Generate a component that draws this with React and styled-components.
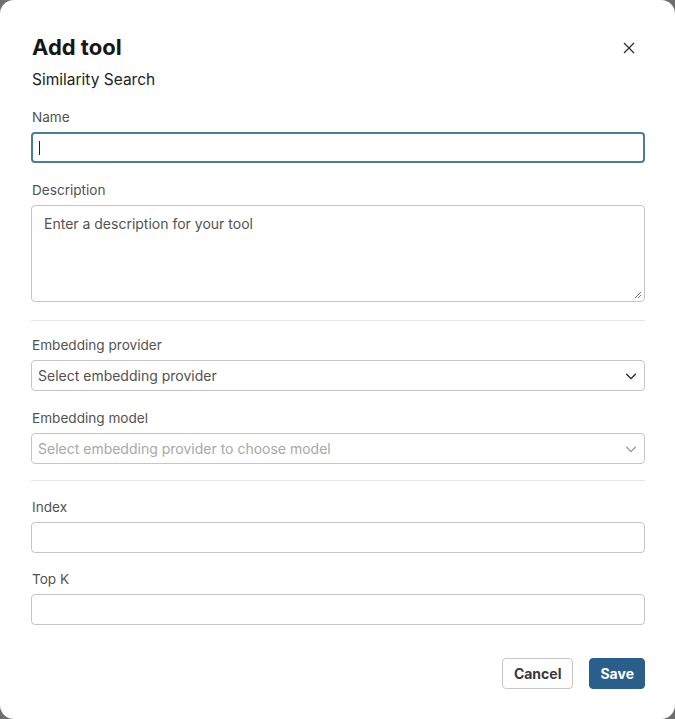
import React from "react";
import styled, { createGlobalStyle } from "styled-components";

const Global = createGlobalStyle`
  html, body { margin: 0; padding: 0; background: #6f6f6f; }
  body { font-family: "Inter", "Noto Sans", sans-serif; color: #161616; }
  * { box-sizing: border-box; }
`;

const Modal = styled.div`
  width: 675px;
  height: 719px;
  background: #ffffff;
  border-radius: 14px;
  padding: 32px 30px 0 31px;
  display: flex;
  flex-direction: column;
`;

const Header = styled.div`
  display: flex;
  justify-content: space-between;
  align-items: flex-start;
`;

const Title = styled.h2`
  margin: 0;
  font-size: 22px;
  line-height: 30px;
  font-weight: 700;
  letter-spacing: 0;
  padding-left: 1px;
`;

const Close = styled.button`
  border: none;
  background: none;
  padding: 0;
  width: 16px;
  height: 16px;
  margin-top: 8px;
  margin-right: 8px;
  display: flex;
  align-items: center;
  justify-content: center;
  cursor: pointer;
`;

const Subtitle = styled.div`
  font-size: 15.5px;
  line-height: 20px;
  margin-top: 8px;
  padding-left: 1px;
  color: #222;
`;

const Section = styled.div`
  display: flex;
  flex-direction: column;
`;

const Label = styled.label`
  font-size: 13.6px;
  line-height: 20px;
  color: #525252;
  padding-left: 1px;
  margin-bottom: 5px;
`;

const Field = styled.div`
  height: ${(p) => p.$h || 31}px;
  border: ${(p) => (p.$focus ? "2px solid #4a7d96" : "1px solid #c6c6c6")};
  border-radius: 4px;
  background: #fff;
  display: flex;
  align-items: ${(p) => (p.$top ? "flex-start" : "center")};
  padding: ${(p) => (p.$top ? "9px 12px" : "0 6px")};
  position: relative;
  font-size: 14px;
  color: ${(p) => (p.$muted ? "#a8a8a8" : "#525252")};
`;

const Caret = styled.span`
  width: 1.2px;
  height: 14px;
  background: #222;
`;

const Placeholder = styled.span`
  flex: 1;
  white-space: nowrap;
`;

const Resize = styled.svg`
  position: absolute;
  right: 2px;
  bottom: 2px;
`;

const Divider = styled.hr`
  border: none;
  border-top: 1px solid #e3e3e3;
  margin: ${(p) => p.$m};
`;

const Group = styled.div`
  display: flex;
  flex-direction: column;
  gap: ${(p) => p.$gap || 17}px;
  margin-top: ${(p) => p.$mt || 0}px;
`;

const Footer = styled.div`
  display: flex;
  justify-content: flex-end;
  gap: 16px;
  margin-top: 33px;
`;

const Button = styled.button`
  height: 31px;
  padding: 0 ${(p) => (p.$primary ? 10 : 11)}px;
  border-radius: 4px;
  font-family: inherit;
  font-size: 14px;
  font-weight: 700;
  cursor: pointer;
  border: ${(p) => (p.$primary ? "1px solid #2b5f8b" : "1px solid #c6c6c6")};
  background: ${(p) => (p.$primary ? "#2b5f8b" : "#fff")};
  color: ${(p) => (p.$primary ? "#fff" : "#393939")};
`;

const Chevron = ({ color }) => (
  <svg width="14" height="14" viewBox="0 0 16 16" fill="none">
    <path d="M3 6l5 5 5-5" stroke={color} strokeWidth="1.6" strokeLinecap="round" strokeLinejoin="round" />
  </svg>
);

export default function App() {
  return (
    <>
      <Global />
      <Modal>
        <Header>
          <Title>Add tool</Title>
          <Close aria-label="Close">
            <svg width="12" height="12" viewBox="0 0 12 12">
              <path d="M1 1l10 10M11 1L1 11" stroke="#333" strokeWidth="1.4" />
            </svg>
          </Close>
        </Header>
        <Subtitle>Similarity Search</Subtitle>

        <Group $mt={17}>
          <Section>
            <Label>Name</Label>
            <Field $focus $h={31}>
              <Caret />
            </Field>
          </Section>
          <Section>
            <Label>Description</Label>
            <Field $top $h={97}>
              <Placeholder>Enter a description for your tool</Placeholder>
              <Resize width="10" height="10" viewBox="0 0 10 10">
                <path d="M9 3L3 9M9 6L6 9" stroke="#777" strokeWidth="1" />
              </Resize>
            </Field>
          </Section>
        </Group>

        <Divider $m="18px 0 14px" />

        <Group>
          <Section>
            <Label>Embedding provider</Label>
            <Field>
              <Placeholder>Select embedding provider</Placeholder>
              <Chevron color="#222" />
            </Field>
          </Section>
          <Section>
            <Label>Embedding model</Label>
            <Field $muted>
              <Placeholder>Select embedding provider to choose model</Placeholder>
              <Chevron color="#9a9a9a" />
            </Field>
          </Section>
        </Group>

        <Divider $m="16px 0 16px" />

        <Group $gap={16}>
          <Section>
            <Label>Index</Label>
            <Field />
          </Section>
          <Section>
            <Label>Top K</Label>
            <Field />
          </Section>
        </Group>

        <Footer>
          <Button>Cancel</Button>
          <Button $primary>Save</Button>
        </Footer>
      </Modal>
    </>
  );
}
